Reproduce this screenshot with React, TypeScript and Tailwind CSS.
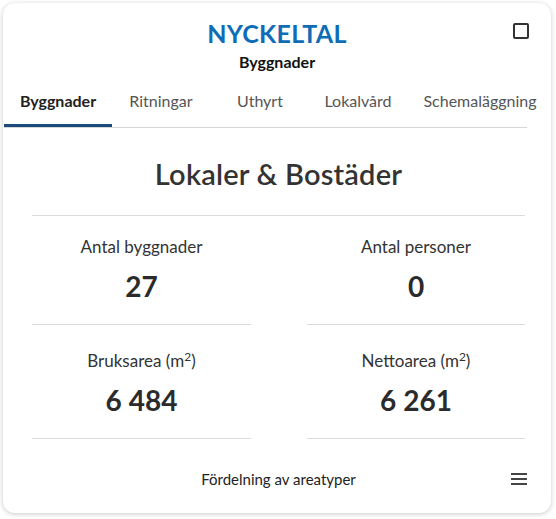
const tabs = [
  { label: 'Byggnader', width: 'w-[108px]', active: true },
  { label: 'Ritningar', width: 'w-[98px]', active: false },
  { label: 'Uthyrt', width: 'w-[100px]', active: false },
  { label: 'Lokalvård', width: 'w-[96px]', active: false },
  { label: 'Schemaläggning', width: 'w-[148px]', active: false },
];

function Stat({ label, value, sup, pt }: { label: string; value: string; sup?: boolean; pt: string }) {
  return (
    <div className={`flex flex-col items-center border-b border-[#dcdcdc] ${pt}`}>
      <div className="text-[17px] leading-[22px] h-[22px] text-[#333]">
        {label}
        {sup && (
          <>
            {' '}(m<sup className="text-[12px] leading-none">2</sup>)
          </>
        )}
      </div>
      <div className="mt-[12px] mb-[22px] text-[28px] leading-[32px] font-bold text-[#2b2b2b]">{value}</div>
    </div>
  );
}

export default function App() {
  return (
    <div
      className="w-[556px] h-[519px] bg-white pl-[3px] pt-[3px]"
      style={{ fontFamily: 'Lato, "Open Sans", sans-serif' }}
    >
      <div className="relative w-[548px] h-[510px] rounded-[12px] bg-white shadow-[0_1px_5px_rgba(0,0,0,0.22)] overflow-hidden">
        <div className="pt-[15px] flex flex-col items-center">
          <h1 className="text-[25px] leading-[30px] font-bold text-[#0f6cb6] tracking-[0.3px]">NYCKELTAL</h1>
          <div className="mt-[4px] text-[16px] leading-[20px] font-bold text-[#111]">Byggnader</div>
        </div>
        <div className="absolute right-[22px] top-[20px] w-[16px] h-[16px] rounded-[2px] border-2 border-[#333]" />

        <div className="mt-[6px] ml-[1px] flex">
          {tabs.map((t) => (
            <div
              key={t.label}
              className={`${t.width} shrink-0 h-[49px] flex items-center justify-center text-[16px] ${
                t.active
                  ? 'border-b-[3px] border-[#1b4a7b] font-bold text-[#222]'
                  : 'border-b-[3px] border-transparent text-[#555]'
              }`}
            >
              {t.label}
            </div>
          ))}
        </div>
        <div className="ml-[1px] w-[523px] h-px bg-[#d6d6d6]" />

        <div className="px-[29px]">
          <div className="w-[493px]">
            <h2 className="mt-[29px] text-center text-[29px] leading-[34px] font-semibold text-[#333] tracking-[0.2px]">
              Lokaler &amp; Bostäder
            </h2>
            <div className="mt-[24px] h-px bg-[#dcdcdc]" />
            <div className="grid grid-cols-[219px_218px] gap-x-[56px]">
              <Stat label="Antal byggnader" value="27" pt="pt-[20px]" />
              <Stat label="Antal personer" value="0" pt="pt-[20px]" />
              <Stat label="Bruksarea" value="6 484" sup pt="pt-[25px]" />
              <Stat label="Nettoarea" value="6 261" sup pt="pt-[25px]" />
            </div>
            <div className="relative mt-[30px] flex justify-center">
              <span className="text-[15px] leading-[20px] text-[#222]">Fördelning av areatyper</span>
              <svg
                className="absolute right-[-2px] top-[3px]"
                width="16"
                height="14"
                viewBox="0 0 16 14"
              >
                <rect x="0" y="1" width="16" height="2" fill="#444" />
                <rect x="0" y="6" width="16" height="2" fill="#444" />
                <rect x="0" y="11" width="16" height="2" fill="#444" />
              </svg>
            </div>
          </div>
        </div>
      </div>
    </div>
  );
}
